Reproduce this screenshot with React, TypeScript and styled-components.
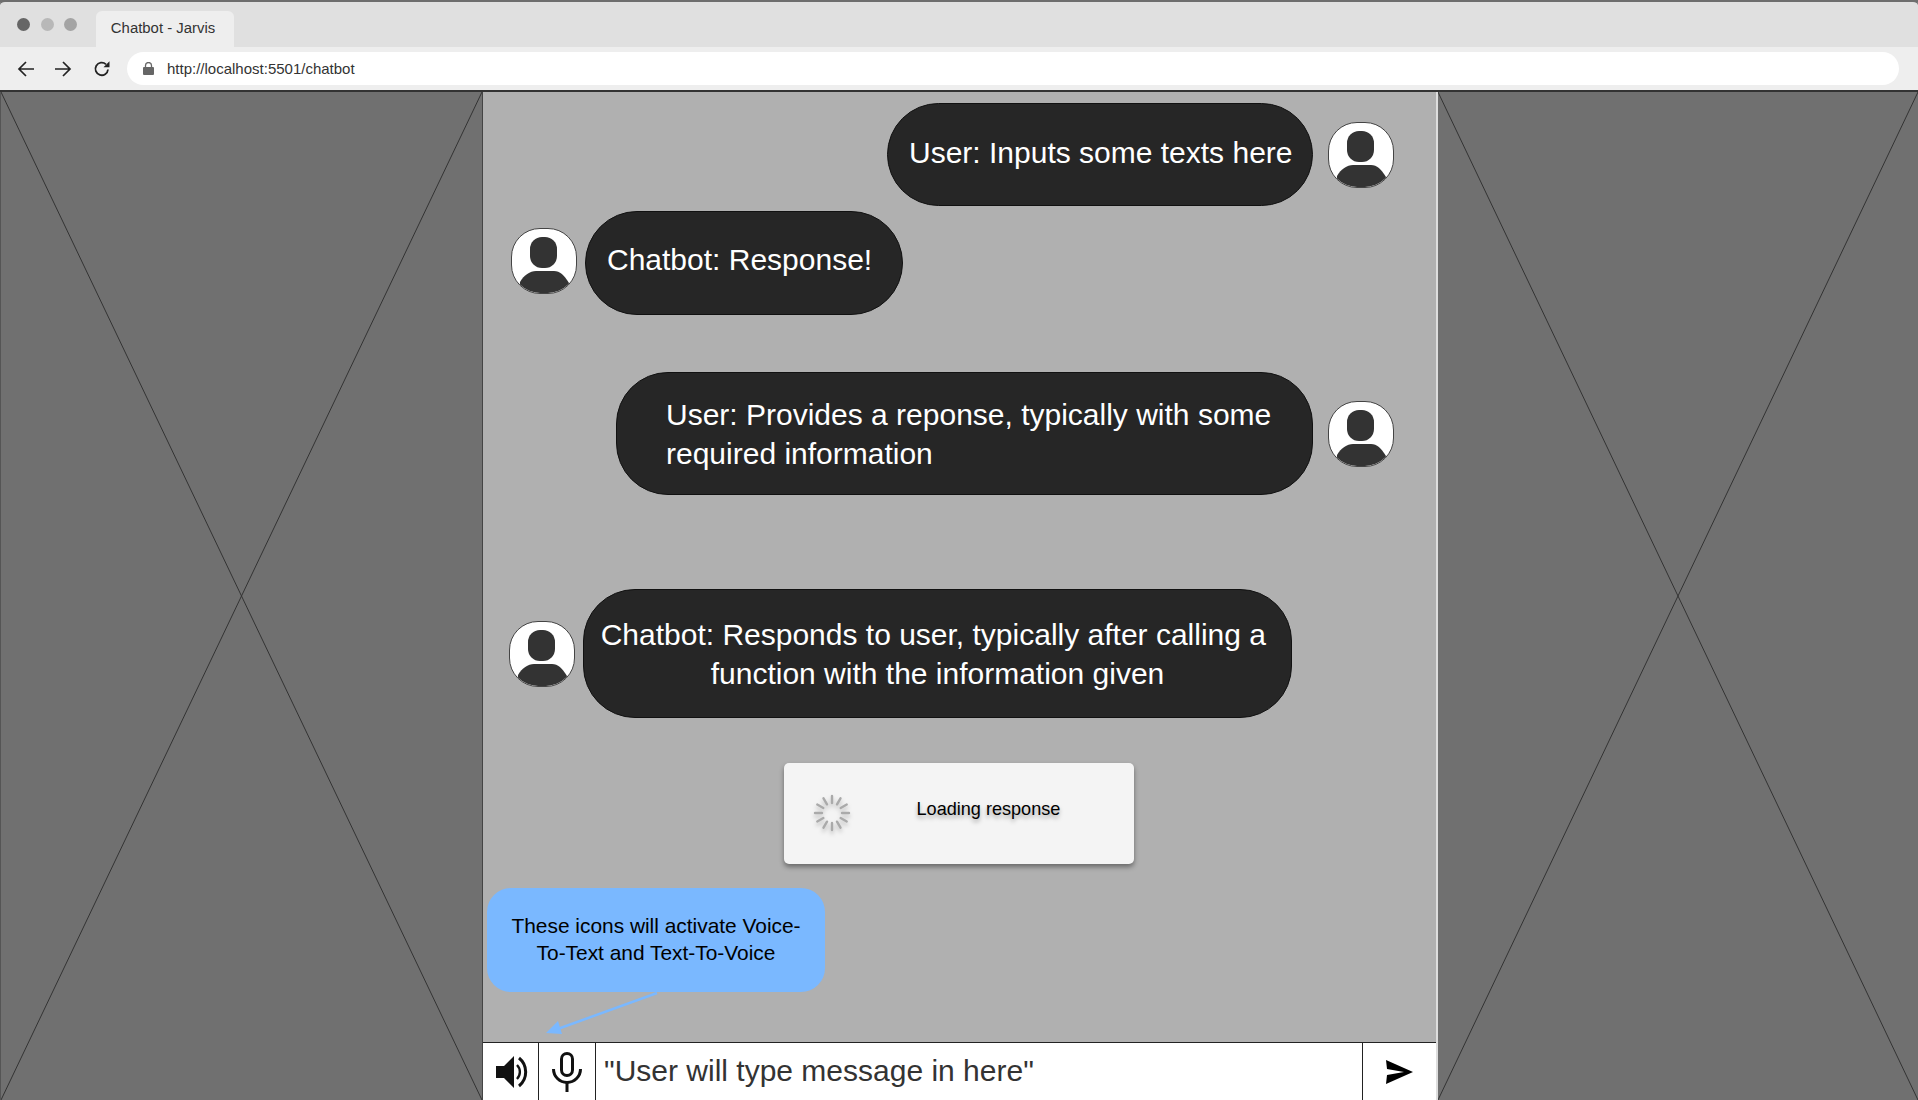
import styled, { createGlobalStyle } from "styled-components";

const GlobalStyle = createGlobalStyle`
html, body {
  margin: 0;
  padding: 0;
  background: #707070;
}
* {
  box-sizing: border-box;
}
`;

const Avatar = ({ lift }: { lift?: number }) => (
  <AvatarBox $lift={lift || 0}>
    <svg width="64" height="64" viewBox="0 0 64 64">
      <rect x="18" y="8" width="27" height="31" rx="12" fill="#333" />
      <path d="M7 64L8 53C12 46 18 42 24 42H42C48 42 52 46 57 54L58 64Z" fill="#333" />
    </svg>
  </AvatarBox>
);

const Spinner = () => (
  <SpinnerSvg width="38" height="38" viewBox="-19 -19 38 38">
    {Array.from({ length: 12 }).map((_, i) => (
      <line
        key={i}
        x1="0"
        y1="-10"
        x2="0"
        y2="-17"
        stroke="#aaa"
        strokeWidth="2.4"
        strokeLinecap="round"
        transform={`rotate(${i * 30})`}
      />
    ))}
  </SpinnerSvg>
);

const Placeholder = ({ width }: { width: number }) => (
  <SidePanel $width={width}>
    <svg width="100%" height="100%" viewBox="0 0 100 100" preserveAspectRatio="none">
      <line x1="0" y1="0" x2="100" y2="100" stroke="#333" strokeWidth="1" vectorEffect="non-scaling-stroke" />
      <line x1="100" y1="0" x2="0" y2="100" stroke="#333" strokeWidth="1" vectorEffect="non-scaling-stroke" />
    </svg>
  </SidePanel>
);

const App = () => {
  return (
    <Page>
      <GlobalStyle />
      <TabBar>
        <Lights>
          <Light $color="#666" />
          <Light $color="#b8b8b8" />
          <Light $color="#a4a4a4" />
        </Lights>
        <Tab>Chatbot - Jarvis</Tab>
      </TabBar>
      <AddressRow>
        <NavIcons>
          <svg width="18" height="18" viewBox="0 0 18 18" fill="none" stroke="#222" strokeWidth="1.7">
            <path d="M17 9H2M9 2L2 9l7 7" />
          </svg>
          <svg width="18" height="18" viewBox="0 0 18 18" fill="none" stroke="#222" strokeWidth="1.7">
            <path d="M1 9h15M9 2l7 7-7 7" />
          </svg>
          <ReloadIcon width="18" height="18" viewBox="0 0 18 18" fill="none">
            <path d="M15 9.5A6.3 6.3 0 1 1 13 4.3" stroke="#222" strokeWidth="1.8" />
            <path d="M10.5 7.2H16.5V1.2Z" fill="#222" />
          </ReloadIcon>
        </NavIcons>
        <UrlPill>
          <svg width="11" height="13" viewBox="0 0 11 13">
            <path d="M2.5 5V3.5a3 3 0 0 1 6 0V5" fill="none" stroke="#666" strokeWidth="1.3" />
            <rect x="0" y="5" width="11" height="8" rx="1" fill="#666" />
          </svg>
          <span>http://localhost:5501/chatbot</span>
        </UrlPill>
      </AddressRow>
      <Body>
        <Placeholder width={482} />
        <Center>
          <Row $side="right" $top={11}>
            <Bubble $width={426} $height={103} $pad={21} $lift={4}>User: Inputs some texts here</Bubble>
            <Avatar />
          </Row>
          <Row $side="left" $top={5}>
            <Avatar lift={2} />
            <Bubble $width={318} $height={104} $pad={21} $lift={7}>Chatbot: Response!</Bubble>
          </Row>
          <Row $side="right" $top={57}>
            <Bubble $width={697} $height={123} $pad={49}>
              User: Provides a reponse, typically with some required information
            </Bubble>
            <Avatar />
          </Row>
          <Row $side="left" $top={94} $shift={-2}>
            <Avatar />
            <Bubble $width={709} $height={129} $pad={14} $center>
              {"Chatbot: Responds to user, typically after calling a\u00a0 function with the information given"}
            </Bubble>
          </Row>
          <LoadingCard>
            <Spinner />
            <LoadingText>Loading response</LoadingText>
          </LoadingCard>
          <Callout>These icons will activate Voice-To-Text and Text-To-Voice</Callout>
          <CalloutArrow width="120" height="50" viewBox="0 0 120 50">
            <line x1="114" y1="1" x2="12" y2="38" stroke="#7ab8ff" strokeWidth="2.5" />
            <path d="M3 41L15 29L19 42Z" fill="#7ab8ff" />
          </CalloutArrow>
          <InputBar>
            <IconCell $width={56} $nudge={3}>
              <svg width="33" height="34" viewBox="0 0 33 34">
                <path d="M0 11H8L18 1V33L8 23H0Z" fill="#111" />
                <path d="M21 10a10 10 0 0 1 0 14" fill="none" stroke="#111" strokeWidth="2.4" />
                <path d="M23 3a18 18 0 0 1 0 28" fill="none" stroke="#111" strokeWidth="3" />
              </svg>
            </IconCell>
            <IconCell $width={57}>
              <svg width="30" height="40" viewBox="0 0 30 40">
                <rect x="9.5" y="1.5" width="11" height="22" rx="5.5" fill="none" stroke="#111" strokeWidth="3" />
                <path d="M1.5 17a13.5 13.5 0 0 0 27 0" fill="none" stroke="#111" strokeWidth="3" />
                <path d="M15 30V40" stroke="#111" strokeWidth="3" />
              </svg>
            </IconCell>
            <MessageField>"User will type message in here"</MessageField>
            <SendCell>
              <svg width="28" height="24" viewBox="0 0 28 24">
                <path d="M0 0L27 12L0 24L1 15L18 12L1 9Z" fill="#000" />
              </svg>
            </SendCell>
          </InputBar>
        </Center>
        <Placeholder width={480} />
      </Body>
    </Page>
  );
};

const Page = styled.div`
width:1918px;
height:1100px;
overflow:hidden;
display:flex;
flex-direction:column;
font-family:"Liberation Sans", Arial, sans-serif;
`;

const TabBar = styled.div`
height:47px;
flex-shrink:0;
background:#e0e0e0;
border-top:2px solid #6e6e6e;
border-radius:5px 5px 0 0;
display:flex;
align-items:flex-end;
padding-left:17px;
`;

const Lights = styled.div`
display:flex;
gap:10.5px;
align-self:flex-start;
margin-top:16px;
width:79px;
`;

const Light = styled.span<{ $color: string }>`
width:13px;
height:13px;
border-radius:50%;
background:${(p) => p.$color};
`;

const Tab = styled.div`
width:138px;
height:36px;
background:#eee;
border-radius:6px 6px 0 0;
color:#333;
font-size:14.9px;
display:flex;
align-items:center;
justify-content:center;
padding:0 4px 3px 0;
`;

const AddressRow = styled.div`
height:45px;
flex-shrink:0;
background:#eee;
border-bottom:2px solid #333;
display:flex;
align-items:center;
padding:0 19px 0 17px;
`;

const NavIcons = styled.div`
display:flex;
gap:19px;
width:110px;
align-items:center;
`;

const ReloadIcon = styled.svg`
margin-left:2px;
`;

const UrlPill = styled.div`
flex:1;
height:33px;
background:#fff;
border-radius:17px;
display:flex;
align-items:center;
gap:13px;
padding-left:16px;
font-size:15px;
color:#333;
`;

const Body = styled.div`
flex:1;
display:flex;
min-height:0;
`;

const SidePanel = styled.div<{ $width: number }>`
width:${(p) => p.$width}px;
flex-shrink:0;
background:#707070;
&:first-child {
  border-left:1px solid #555;
}
svg {
  display:block;
}
`;

const Center = styled.div`
position:relative;
width:956px;
flex-shrink:0;
background:#b0b0b0;
border-left:1px solid #444;
border-right:2px solid #ddd;
display:flex;
flex-direction:column;
`;

const Row = styled.div<{ $side: "left" | "right"; $top: number; $shift?: number }>`
display:flex;
align-items:center;
margin-top:${(p) => p.$top}px;
justify-content:${(p) => (p.$side === "right" ? "flex-end" : "flex-start")};
gap:${(p) => (p.$side === "right" ? 15 : 8)}px;
padding-left:${(p) => 28 + (p.$shift || 0)}px;
padding-right:42px;
`;

const Bubble = styled.div<{ $width: number; $height: number; $pad: number; $center?: boolean; $lift?: number }>`
width:${(p) => p.$width}px;
height:${(p) => p.$height}px;
padding:0 14px ${(p) => p.$lift || 0}px ${(p) => p.$pad}px;
background:#262626;
border:1px solid #111;
border-radius:52px;
color:#fff;
font-size:30px;
line-height:39px;
display:flex;
align-items:center;
text-align:${(p) => (p.$center ? "center" : "left")};
`;

const AvatarBox = styled.div<{ $lift: number }>`
width:66px;
height:66px;
flex-shrink:0;
margin-bottom:${(p) => p.$lift * 2}px;
background:#fff;
border:1px solid #444;
border-radius:29px;
overflow:hidden;
svg {
  display:block;
}
`;

const LoadingCard = styled.div`
align-self:center;
margin-top:45px;
width:350px;
height:101px;
margin-right:2px;
background:#f4f4f4;
border-radius:5px;
box-shadow:0 3px 5px rgba(0,0,0,0.4);
display:flex;
align-items:center;
padding-left:29px;
`;

const SpinnerSvg = styled.svg`
filter:drop-shadow(0 3px 2px rgba(0,0,0,0.25));
margin-top:-1px;
`;

const LoadingText = styled.span`
margin-left:66px;
margin-top:-8px;
font-size:18.1px;
color:#000;
text-shadow:0 3px 4px rgba(0,0,0,0.35);
`;

const Callout = styled.div`
margin:24px 0 0 4px;
width:338px;
height:104px;
padding:24px 14px 0;
background:#7ab8ff;
border-radius:24px;
color:#000;
font-size:20.9px;
line-height:27px;
text-align:center;
`;

const CalloutArrow = styled.svg`
position:absolute;
left:60px;
top:900px;
`;

const InputBar = styled.div`
margin-top:auto;
height:58px;
flex-shrink:0;
background:#fff;
border-top:1px solid #222;
display:flex;
`;

const IconCell = styled.div<{ $width: number; $nudge?: number }>`
width:${(p) => p.$width}px;
flex-shrink:0;
padding-left:${(p) => p.$nudge || 0}px;
border-right:1px solid #222;
display:flex;
align-items:center;
justify-content:center;
`;

const MessageField = styled.div`
flex:1;
padding:0 0 2px 8px;
font-size:30px;
color:#333;
display:flex;
align-items:center;
`;

const SendCell = styled.div`
width:74px;
flex-shrink:0;
border-left:1px solid #222;
display:flex;
align-items:center;
justify-content:center;
`;

export default App;
